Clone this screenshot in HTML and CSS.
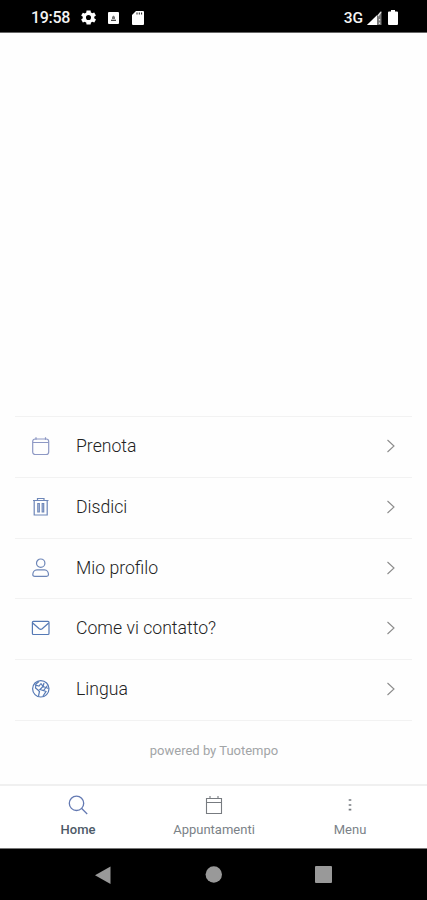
FILE: index.html
```html
<!DOCTYPE html>
<html lang="it">
<head>
<meta charset="utf-8">
<title>Home</title>
<link rel="stylesheet" href="styles.css">
</head>
<body>
<header class="status">
  <span class="time">19:58</span>
  <svg class="s-gear" width="17" height="17" viewBox="1 1 22 22"><path fill="#fff" fill-rule="evenodd" d="M19.400 13a7.500 7.500 0 0 0 0-2l2.200-1.700-2.200-3.700-2.600 1a8 8 0 0 0-1.700-1L14.700 3H9.500L9 5.700a8 8 0 0 0-1.700 1l-2.600-1-2.200 3.700L4.600 11a7.500 7.500 0 0 0 0 2l-2.100 1.700 2.200 3.700 2.600-1a8 8 0 0 0 1.700 1l.5 2.700h5.200l.5-2.700a8 8 0 0 0 1.700-1l2.600 1 2.200-3.700zM12 15.300a3.300 3.300 0 1 1 0-6.600 3.300 3.300 0 0 1 0 6.600z"/></svg>
  <svg class="s-app" width="11" height="12" viewBox="0 0 11 12"><rect width="11" height="12" rx="1" fill="#fff"/><path d="M4 7V5l1.500-1.500L7 5v2z" fill="#777"/><path d="M3 8.300h5" fill="none" stroke="#333" stroke-width="1.200"/></svg>
  <svg class="s-sd" width="12" height="14" viewBox="0 0 12 14"><path fill="#fff" d="M4 0h7a1 1 0 0 1 1 1v12a1 1 0 0 1-1 1H1a1 1 0 0 1-1-1V4z"/><path d="M5 1.500v2M7.300 1.500v2M9.600 1.500v2" stroke="#222" stroke-width="1"/></svg>
  <span class="net">3G</span>
  <svg class="s-signal" width="15" height="14" viewBox="0 0 15 14"><path d="M14.500 0v14H0z" fill="#777"/><path d="M10 4.300V14H0z" fill="#fff"/><path d="M11 5l3-4M12.500 8v1.500M12.500 11.500V13" stroke="#ddd" stroke-width="1.300"/></svg>
  <svg class="s-batt" width="10" height="15" viewBox="0 0 10 15"><path fill="#fff" d="M3 0h4v1.500h2a1 1 0 0 1 1 1V14a1 1 0 0 1-1 1H1a1 1 0 0 1-1-1V2.500a1 1 0 0 1 1-1h2z"/></svg>
</header>
<main class="content">
  <ul class="list">
    <li class="row">
      <svg class="icon pale" viewBox="0 0 20 20"><rect x="1.700" y="3" width="16" height="15.500" rx="2.500"/><path d="M2 6.500h15.500M5 1.200v2.500M14.500 1.200v2.500"/></svg>
      <span class="label">Prenota</span>
      <svg class="chevron" viewBox="0 0 10 14"><path d="M1.500 1l6.500 6-6.500 6"/></svg>
    </li>
    <li class="row">
      <svg class="icon" viewBox="0 0 20 20"><path d="M2 3.500h15.500M3.200 3.500V18h13V3.500M6.500 3V1.500h6.500V3M6.800 6.500v8.500h1.500V6.500zM11.200 6.500v8.500h1.500V6.500z"/></svg>
      <span class="label">Disdici</span>
      <svg class="chevron" viewBox="0 0 10 14"><path d="M1.500 1l6.500 6-6.500 6"/></svg>
    </li>
    <li class="row">
      <svg class="icon" viewBox="0 0 20 20"><circle cx="9.700" cy="5.200" r="4.200"/><path d="M6 11.800h7.500c2.500 0 4 2.500 4 5 0 1-.8 1.500-2 1.500H3.800c-1.200 0-2-.5-2-1.500 0-2.500 1.500-5 4.200-5z"/></svg>
      <span class="label">Mio profilo</span>
      <svg class="chevron" viewBox="0 0 10 14"><path d="M1.500 1l6.500 6-6.500 6"/></svg>
    </li>
    <li class="row">
      <svg class="icon strong" viewBox="0 0 20 20"><rect x="1.400" y="3.300" width="16.600" height="13.200" rx="1"/><path d="M1.700 5l6.500 5.700q1.500 1.200 3 0L17.700 5"/></svg>
      <span class="label">Come vi contatto?</span>
      <svg class="chevron" viewBox="0 0 10 14"><path d="M1.500 1l6.500 6-6.500 6"/></svg>
    </li>
    <li class="row">
      <svg class="icon strong" viewBox="0 0 20 20"><circle cx="9.800" cy="9.800" r="8.200"/><path d="M8 2.500L5 5l-.5 4L7 11l1.500 1.500L7.500 17M4 6l4 1 2-2.500M10 4.500l2 3-3 3 3.500 1 4-5M12.500 11.500l2.500 1-3 4.500M13 4l-1 3.500 5.500 2"/></svg>
      <span class="label">Lingua</span>
      <svg class="chevron" viewBox="0 0 10 14"><path d="M1.500 1l6.500 6-6.500 6"/></svg>
    </li>
  </ul>
  <p class="powered">powered by Tuotempo</p>
</main>
<nav class="tabs">
  <div class="tab active">
    <svg class="tab-icon" viewBox="0 0 20 20"><circle cx="8.500" cy="8.300" r="7.200"/><path d="M13.700 13.500l5.500 5.500"/></svg>
    <span>Home</span>
  </div>
  <div class="tab">
    <svg class="tab-icon" viewBox="0 0 20 20"><path d="M2.500 3.500h15v15h-15zM2.500 7.500h15M6 1v2.500M14 1v2.500"/></svg>
    <span>Appuntamenti</span>
  </div>
  <div class="tab">
    <svg class="tab-icon dots" viewBox="0 0 20 20"><path d="M8.700 5h2.600M8.700 10h2.600M8.700 14.700h2.600"/></svg>
    <span>Menu</span>
  </div>
</nav>
<footer class="system">
  <svg width="16" height="18" viewBox="0 0 16 18"><path d="M15.500.5v17.500L0 9.300z" fill="#999"/></svg>
  <svg width="17" height="17" viewBox="0 0 17 17"><circle cx="8.800" cy="8.500" r="8.200" fill="#999"/></svg>
  <svg width="17" height="17" viewBox="0 0 17 17"><rect width="17" height="17" rx="1" fill="#999"/></svg>
</footer>
</body>
</html>
```
FILE: styles.css
```css
* { box-sizing: border-box; }

body {
  margin: 0;
  height: 900px;
  display: flex;
  flex-direction: column;
  background: #fefefe;
  font-family: Roboto, "Liberation Sans", sans-serif;
  overflow: hidden;
}

.status {
  height: 33px;
  flex: none;
  display: flex;
  align-items: center;
  padding: 3px 29px 0 31px;
  background: #000;
  border-bottom: 1px solid #666;
  color: #f4f4f4;
  font-size: 16px;
  font-weight: 500;
}

.time { width: 49px; letter-spacing: -0.300px; }
.s-app { margin-left: 11px; }
.s-sd { margin-left: 13px; }
.net { margin-left: auto; font-size: 15.500px; }
.s-signal { margin-left: 4px; }
.s-batt { margin-left: 6px; }

.content {
  flex: 1;
  display: flex;
  flex-direction: column;
  justify-content: flex-end;
  padding: 0 15px;
}

.list {
  margin: 0;
  padding: 0;
  list-style: none;
  border-top: 1px solid #f2f2f2;
}

.row {
  height: 60.800px;
  display: flex;
  align-items: center;
  padding: 0 16px 2px;
  border-bottom: 1px solid #f2f2f2;
}

.icon {
  width: 20px;
  height: 20px;
  margin-right: 25px;
  fill: none;
  stroke: #6d86b8;
  stroke-width: 1.200;
}

.pale { stroke: #8d98c4; }
.strong { stroke: #5579b5; }

.label {
  flex: 1;
  color: #222;
  font-size: 17.650px;
  font-weight: 300;
  line-height: 24px;
}

.chevron {
  width: 10px;
  height: 14px;
  fill: none;
  stroke: #8b8b8b;
  stroke-width: 1.100;
}

.powered {
  height: 63px;
  margin: 0;
  padding: 22px 0 0 1px;
  text-align: center;
  font-size: 13px;
  line-height: 16px;
  color: #a2a5a7;
}

.tabs {
  flex: none;
  height: 65px;
  display: grid;
  grid-template-columns: repeat(3, 136px);
  justify-content: center;
  padding-left: 1px;
  border-top: 2px solid #f0f0f0;
  border-bottom: 1px solid #777;
  background: #fff;
}

.tab {
  display: flex;
  flex-direction: column;
  align-items: center;
  padding-top: 9px;
  color: #7b8288;
  font-size: 13px;
  line-height: 16px;
}

.tab-icon {
  width: 20px;
  height: 20px;
  margin-bottom: 7px;
  fill: none;
  stroke: #777b80;
  stroke-width: 1.100;
}

.active { color: #4d5a68; font-weight: 500; }
.active .tab-icon { stroke: #6379b2; stroke-width: 1.300; }
.dots { stroke-width: 1.700; }

.system {
  flex: none;
  height: 51px;
  display: flex;
  align-items: center;
  justify-content: space-between;
  padding: 0 95px;
  background: #000;
}
```
